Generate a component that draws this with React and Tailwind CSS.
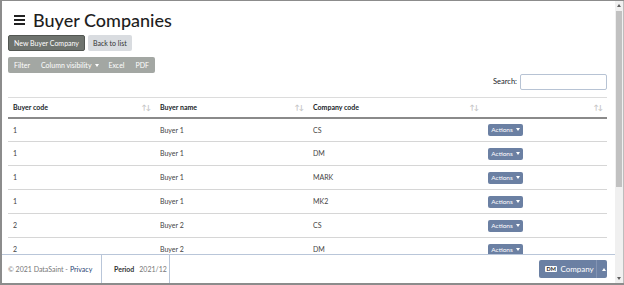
import React from 'react';

const rows = [
  { code: '1', name: 'Buyer 1', company: 'CS' },
  { code: '1', name: 'Buyer 1', company: 'DM' },
  { code: '1', name: 'Buyer 1', company: 'MARK' },
  { code: '1', name: 'Buyer 1', company: 'MK2' },
  { code: '2', name: 'Buyer 2', company: 'CS' },
  { code: '2', name: 'Buyer 2', company: 'DM' },
];

const SortIcon = () => (
  <span className="text-[7px] leading-none tracking-[-1px] text-[#c4c4c4]">↑↓</span>
);

const Caret = ({ up }) => (
  <span
    className={`ml-[3px] inline-block h-0 w-0 border-x-[2.5px] border-x-transparent ${
      up ? 'border-b-[3px] border-b-white' : 'border-t-[3px] border-t-white'
    }`}
  />
);

const App = () => {
  return (
    <div
      className="flex h-[285px] w-[624px] overflow-hidden border-t border-b-2 border-l-2 border-[#8c8c8c] bg-white text-[#212529]"
      style={{ fontFamily: 'Lato, "Noto Sans", sans-serif' }}
    >
      <div className="flex min-w-0 flex-1 flex-col">
        {/* page content */}
        <div className="min-h-0 flex-1 overflow-hidden pl-[6px] pr-[8px] pt-[5px]">
          <div className="flex h-[28px] items-center">
            <div className="ml-[6px] mr-[8px] flex w-[11px] flex-col gap-[2px]">
              <span className="h-[2px] bg-[#222]" />
              <span className="h-[2px] bg-[#222]" />
              <span className="h-[2px] bg-[#222]" />
            </div>
            <h1 className="text-[18px] font-medium leading-none text-[#1e1e1e]">Buyer Companies</h1>
          </div>

          <div className="mt-[1px] flex h-[16px] gap-[3px] whitespace-nowrap text-[7px]">
            <button className="rounded-[2px] border border-[#525652] bg-[#6e736e] px-[5px] text-white">
              New Buyer Company
            </button>
            <button className="rounded-[2px] bg-[#d9dce0] px-[5px] text-[#333]">Back to list</button>
          </div>

          <div className="mt-[6px] flex h-[16px] w-fit items-center whitespace-nowrap rounded-[2px] bg-[#a3a7a3] text-[7px] text-white">
            <span className="px-[6px]">Filter</span>
            <span className="flex items-center px-[5px]">
              Column visibility
              <Caret />
            </span>
            <span className="px-[5px]">Excel</span>
            <span className="px-[6px]">PDF</span>
          </div>

          <div className="mt-[1px] flex h-[16px] items-center justify-end gap-[3px] text-[7.5px]">
            <span>Search:</span>
            <div className="h-[16px] w-[87px] rounded-[2px] border border-[#b7c3d4] bg-white" />
          </div>

          <table className="mt-[7px] w-full table-fixed border-collapse text-[7px]">
            <colgroup>
              <col className="w-[147px]" />
              <col className="w-[153px]" />
              <col className="w-[175px]" />
              <col />
            </colgroup>
            <thead>
              <tr className="h-[20px] border-t border-b-2 border-t-[#dcdcdc] border-b-[#8a8a8a] font-bold">
                {['Buyer code', 'Buyer name', 'Company code', ''].map((h, i) => (
                  <th key={i} className="px-[5px] text-left font-bold">
                    <div className="flex items-center justify-between">
                      <span>{h}</span>
                      <SortIcon />
                    </div>
                  </th>
                ))}
              </tr>
            </thead>
            <tbody>
              {rows.map((r, i) => (
                <tr key={i} className="h-[24px] border-b border-[#d6d6d6] text-[#444]">
                  <td className="px-[5px]">{r.code}</td>
                  <td className="px-[5px]">{r.name}</td>
                  <td className="px-[5px]">{r.company}</td>
                  <td className="px-[5px]">
                    <button className="flex h-[12px] w-[35px] items-center justify-center rounded-[2px] bg-[#6b80a3] text-[6.5px] text-white">
                      Actions
                      <Caret />
                    </button>
                  </td>
                </tr>
              ))}
            </tbody>
          </table>
        </div>

        {/* footer */}
        <div className="flex h-[29px] shrink-0 items-stretch border-t border-[#b9c6d9] bg-white text-[7px]">
          <div className="flex w-[100px] items-center whitespace-nowrap border-r border-[#b9c6d9] pl-[6px] text-[#777]">
            © 2021 DataSaint - <span className="ml-[2px] text-[#1f3f73]">Privacy</span>
          </div>
          <div className="flex w-[68px] items-center gap-[5px] border-r border-[#b9c6d9] pl-[12px] text-[#777]">
            <span className="font-bold text-[#333]">Period</span>
            <span>2021/12</span>
          </div>
          <div className="flex flex-1 items-center justify-end pr-[8px]">
            <div className="flex h-[18px] overflow-hidden rounded-[2px] bg-[#6b80a3] text-white">
              <div className="flex w-[57px] items-center gap-[3px] pl-[6px]">
                <span className="rounded-[1px] bg-white px-[1.5px] text-[5.5px] font-bold leading-[6px] text-[#222]">DM</span>
                <span className="text-[8px]">Company</span>
              </div>
              <div className="flex w-[11px] items-center justify-center border-l border-[#8394b3]">
                <Caret up />
              </div>
            </div>
          </div>
        </div>
      </div>

      {/* scrollbar */}
      <div className="flex w-[9px] shrink-0 flex-col items-center border-r border-[#bdbdbd] bg-[#f0f0f0]">
        <div className="mt-[3px] h-0 w-0 border-x-[2.5px] border-b-[3px] border-x-transparent border-b-[#606060]" />
        <div className="mt-[4px] h-[176px] w-[6px] bg-[#c1c1c1]" />
        <div className="flex-1" />
        <div className="mb-[3px] h-0 w-0 border-x-[2.5px] border-t-[3px] border-x-transparent border-t-[#606060]" />
      </div>
    </div>
  );
};

export default App;
